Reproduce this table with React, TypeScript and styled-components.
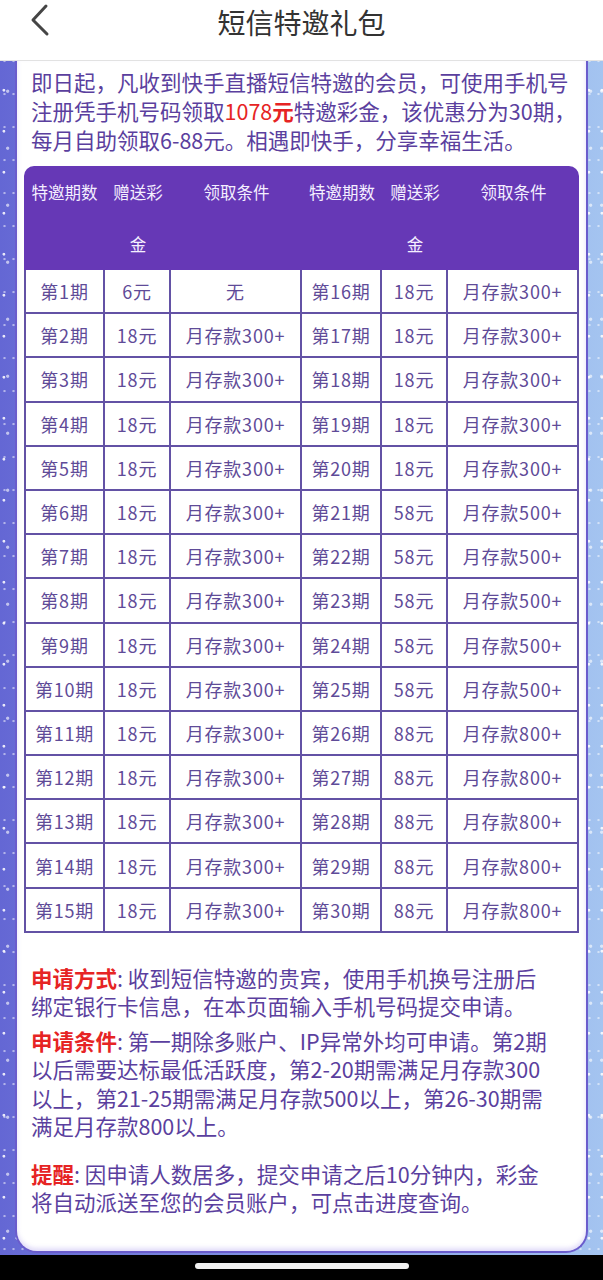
import React from "react";
import styled, { createGlobalStyle } from "styled-components";

const Global = createGlobalStyle`
  html, body { margin: 0; padding: 0; }
  body {
    font-family: "Noto Sans CJK SC", "Noto Sans", sans-serif;
    background-color: #7a86dc;
    background-image:
      radial-gradient(circle at 30% 20%, rgba(255,255,255,0.85) 0 1px, transparent 1.8px),
      radial-gradient(circle at 70% 60%, rgba(255,255,255,0.6) 0 1.2px, transparent 2px),
      radial-gradient(circle at 50% 85%, rgba(255,255,255,0.5) 0 0.8px, transparent 1.5px),
      linear-gradient(90deg, #6467d4 0%, #7077d8 15%, #8aa2e6 60%, #a4c4f0 100%);
    background-size: 13px 41px, 11px 57px, 9px 33px, 100% 100%;
  }
`;

const Page = styled.div`
  width: 603px;
  height: 1280px;
  display: flex;
  flex-direction: column;
  overflow: hidden;
`;

const Header = styled.header`
  height: 60px;
  flex: none;
  background: #ffffff;
  border-bottom: 1px solid #e2e2e2;
  position: relative;
  display: flex;
  justify-content: center;
`;

const BackButton = styled.button`
  position: absolute;
  left: 26px;
  top: 0;
  width: 30px;
  height: 40px;
  padding: 0;
  border: none;
  background: none;
  display: flex;
  align-items: center;
  justify-content: center;
`;

const Title = styled.h1`
  margin: 0;
  font-size: 28px;
  line-height: 44px;
  font-weight: 400;
  color: #333333;
`;

const Card = styled.main`
  flex: none;
  margin: 0 15px;
  background: #ffffff;
  border: 2px solid #6a5ccc;
  border-top: none;
  border-radius: 0 0 22px 22px;
  padding: 6px 7px 34px;
  box-shadow: inset 0 -3px 4px rgba(140, 120, 230, 0.25);
`;

const Intro = styled.p`
  margin: 0;
  padding: 0 7px;
  font-size: 21.5px;
  line-height: 29px;
  color: #5b3f9e;
  white-space: nowrap;
`;

const Red = styled.span<{ $bold?: boolean }>`
  color: #e62424;
  font-weight: ${(p) => (p.$bold ? 700 : 400)};
`;

const Table = styled.table`
  margin-top: 12px;
  width: 100%;
  border-collapse: separate;
  border-spacing: 0;
  table-layout: fixed;
`;

const Th = styled.th`
  background: #6638b6;
  color: #f4efff;
  font-weight: 400;
  font-size: 16.5px;
  line-height: 52px;
  vertical-align: top;
  padding: 0 6px;
  border: none;
  text-align: center;
  &:first-child { border-top-left-radius: 10px; }
  &:last-child { border-top-right-radius: 10px; }
`;

const Td = styled.td`
  height: 42.2px;
  padding: 0;
  border-right: 2px solid #6352a5;
  border-bottom: 2px solid #6352a5;
  text-align: center;
  vertical-align: middle;
  font-size: 18px;
  letter-spacing: 0.8px;
  color: #5f4b98;
  &:first-child { border-left: 2px solid #6352a5; }
`;

const Notes = styled.section`
  margin-top: 31px;
  padding: 0 7px;
  display: flex;
  flex-direction: column;
`;

const Note = styled.p<{ $gap: number }>`
  margin: ${(p) => p.$gap}px 0 0;
  font-size: 21.5px;
  line-height: 28.5px;
  color: #5b3f9e;
  white-space: nowrap;
`;

const Label = styled.span`
  color: #e62424;
  font-weight: 700;
`;

const NavBar = styled.div`
  margin-top: auto;
  height: 25px;
  flex: none;
  background: #000000;
  display: flex;
  justify-content: center;
  padding-top: 8px;
  box-sizing: border-box;
`;

const Pill = styled.div`
  width: 214px;
  height: 6px;
  border-radius: 3px;
  background: #f2f2f2;
`;

type Row = { p: string; g: string; c: string };

const left: Row[] = Array.from({ length: 15 }, (_, i) =>
  i === 0
    ? { p: "第1期", g: "6元", c: "无" }
    : { p: `第${i + 1}期`, g: "18元", c: "月存款300+" }
);

const right: Row[] = Array.from({ length: 15 }, (_, i) => {
  const n = i + 16;
  if (n <= 20) return { p: `第${n}期`, g: "18元", c: "月存款300+" };
  if (n <= 25) return { p: `第${n}期`, g: "58元", c: "月存款500+" };
  return { p: `第${n}期`, g: "88元", c: "月存款800+" };
});

const widths = [81, 66, 131, 80, 66, 131];
const heads = ["特邀期数", "赠送彩金", "领取条件", "特邀期数", "赠送彩金", "领取条件"];

export default function App() {
  return (
    <Page>
      <Global />
      <Header>
        <BackButton aria-label="返回">
          <svg width="22" height="34" viewBox="0 0 22 34">
            <polyline
              points="16,3 3,17 17,31"
              fill="none"
              stroke="#454545"
              strokeWidth="3"
              strokeLinecap="round"
              strokeLinejoin="round"
            />
          </svg>
        </BackButton>
        <Title>短信特邀礼包</Title>
      </Header>
      <Card>
        <Intro>
          即日起，凡收到快手直播短信特邀的会员，可使用手机号
          <br />
          注册凭手机号码领取<Red>1078</Red>
          <Red $bold>元</Red>特邀彩金，该优惠分为30期，
          <br />
          每月自助领取6-88元。相遇即快手，分享幸福生活。
        </Intro>
        <Table>
          <colgroup>
            {widths.map((w, i) => (
              <col key={i} style={{ width: w }} />
            ))}
          </colgroup>
          <thead>
            <tr>
              {heads.map((h, i) => (
                <Th key={i}>{h}</Th>
              ))}
            </tr>
          </thead>
          <tbody>
            {left.map((l, i) => {
              const r = right[i];
              return (
                <tr key={i}>
                  <Td>{l.p}</Td>
                  <Td>{l.g}</Td>
                  <Td>{l.c}</Td>
                  <Td>{r.p}</Td>
                  <Td>{r.g}</Td>
                  <Td>{r.c}</Td>
                </tr>
              );
            })}
          </tbody>
        </Table>
        <Notes>
          <Note $gap={0}>
            <Label>申请方式</Label>: 收到短信特邀的贵宾，使用手机换号注册后
            <br />
            绑定银行卡信息，在本页面输入手机号码提交申请。
          </Note>
          <Note $gap={6}>
            <Label>申请条件</Label>: 第一期除多账户、IP异常外均可申请。第2期
            <br />
            以后需要达标最低活跃度，第2-20期需满足月存款300
            <br />
            以上，第21-25期需满足月存款500以上，第26-30期需
            <br />
            满足月存款800以上。
          </Note>
          <Note $gap={19}>
            <Label>提醒</Label>: 因申请人数居多，提交申请之后10分钟内，彩金
            <br />
            将自动派送至您的会员账户，可点击进度查询。
          </Note>
        </Notes>
      </Card>
      <NavBar>
        <Pill />
      </NavBar>
    </Page>
  );
}
